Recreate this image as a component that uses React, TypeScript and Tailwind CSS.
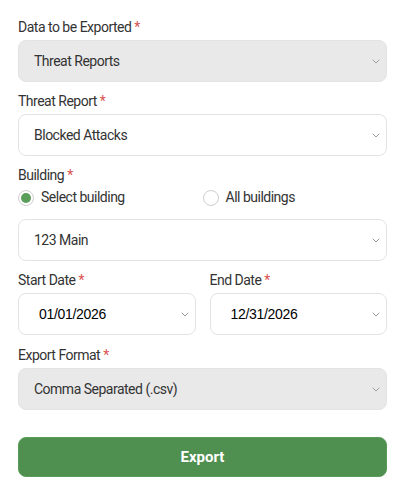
import React from "react";

function Chevron() {
  return (
    <svg width="8" height="5" viewBox="0 0 8 5" className="shrink-0" aria-hidden>
      <path d="M1 1l3 3 3-3" fill="none" stroke="#9a9a9a" strokeWidth="1" strokeLinecap="round" strokeLinejoin="round" />
    </svg>
  );
}

function Label({ children }: { children: React.ReactNode }) {
  return (
    <p className="h-5 text-[14px] leading-5 tracking-[-0.5px] text-[#333]">
      {children} <span className="text-[#d9534f]">*</span>
    </p>
  );
}

function SelectBox({
  value,
  disabled,
  date,
}: {
  value: string;
  disabled?: boolean;
  date?: boolean;
}) {
  return (
    <div
      className={`mt-[3px] flex h-[42px] items-center justify-between rounded-lg border border-[#e3e3e3] pr-[6px] ${
        disabled ? "bg-[#e9e9e9]" : "bg-white"
      } ${date ? "pl-5" : "pl-[15px]"}`}
    >
      {date ? (
        <span
          className="text-[14px] tracking-[-0.3px] text-black"
          style={{ fontFamily: "'Liberation Sans', Arial, sans-serif" }}
        >
          {value}
        </span>
      ) : (
        <span className="text-[14px] tracking-[-0.5px] text-[#333]">{value}</span>
      )}
      <Chevron />
    </div>
  );
}

function Radio({ checked, label }: { checked?: boolean; label: string }) {
  return (
    <label className="flex items-center gap-[7px] text-[14px] tracking-[-0.5px] text-[#333]">
      <span className="flex h-4 w-4 items-center justify-center rounded-full border border-[#cfcfcf] bg-white">
        {checked && <span className="h-[10px] w-[10px] rounded-full bg-[#5a9e5a]" />}
      </span>
      {label}
    </label>
  );
}

export default function App() {
  return (
    <div
      className="min-h-[496px] w-[405px] bg-white px-[18px] pt-[17px]"
      style={{ fontFamily: "Roboto, 'Liberation Sans', sans-serif" }}
    >
      <Label>Data to be Exported</Label>
      <SelectBox value="Threat Reports" disabled />

      <div className="mt-[9px]">
        <Label>Threat Report</Label>
        <SelectBox value="Blocked Attacks" />
      </div>

      <div className="mt-[9px]">
        <Label>Building</Label>
        <div className="mt-[2px] grid h-5 grid-cols-2">
          <Radio checked label="Select building" />
          <Radio label="All buildings" />
        </div>
        <div className="mt-[12px]">
          <SelectBox value="123 Main" />
        </div>
      </div>

      <div className="mt-[9px] grid grid-cols-2 gap-[14px]">
        <div>
          <Label>Start Date</Label>
          <SelectBox value="01/01/2026" date />
        </div>
        <div>
          <Label>End Date</Label>
          <SelectBox value="12/31/2026" date />
        </div>
      </div>

      <div className="mt-[10px]">
        <Label>Export Format</Label>
        <SelectBox value="Comma Separated (.csv)" disabled />
      </div>

      <button className="mt-[27px] flex h-[40px] w-full items-center justify-center rounded-lg border border-[#5a9c5a] bg-[#4f8f4f] text-[15px] font-bold text-white">
        Export
      </button>
    </div>
  );
}
